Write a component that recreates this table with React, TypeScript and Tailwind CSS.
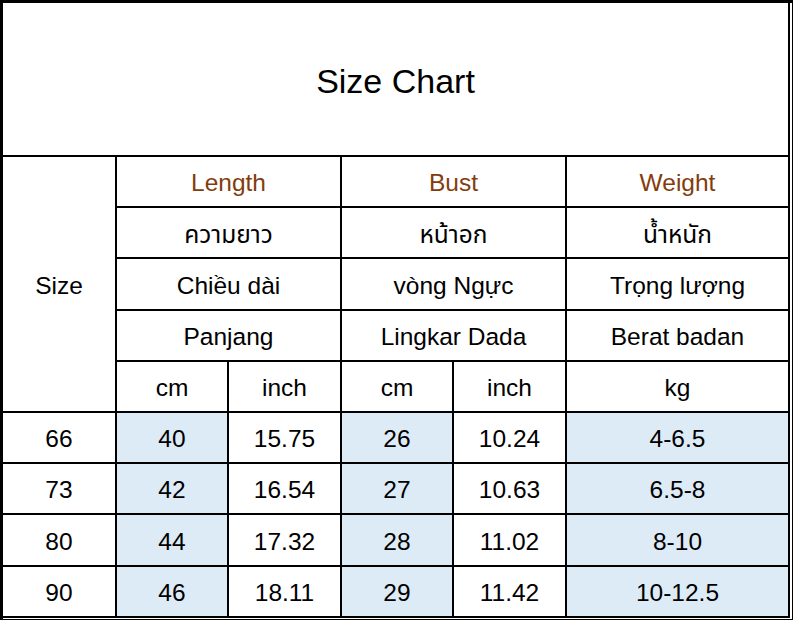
const headers = [
  { label: "Length", span: "col-span-2" },
  { label: "Bust", span: "col-span-2" },
  { label: "Weight", span: "" },
];

const translations = [
  ["ความยาว", "หน้าอก", "น้ำหนัก"],
  ["Chiều dài", "vòng Ngực", "Trọng lượng"],
  ["Panjang", "Lingkar Dada", "Berat badan"],
];

const units = ["cm", "inch", "cm", "inch", "kg"];

const rows = [
  ["66", "40", "15.75", "26", "10.24", "4-6.5"],
  ["73", "42", "16.54", "27", "10.63", "6.5-8"],
  ["80", "44", "17.32", "28", "11.02", "8-10"],
  ["90", "46", "18.11", "29", "11.42", "10-12.5"],
];

const blueCols = [1, 3, 5];

function Cell({
  children,
  className = "",
  color = "text-black",
  bg = "bg-white",
}: {
  children?: React.ReactNode;
  className?: string;
  color?: string;
  bg?: string;
}) {
  return (
    <div
      className={`flex items-center justify-center pt-[4px] text-[24.5px] leading-none ${color} ${bg} ${className}`}
    >
      {children}
    </div>
  );
}

export default function App() {
  return (
    <div
      className="h-[622px] w-[797px] bg-white"
      style={{ fontFamily: '"Liberation Sans", Arial, "Noto Sans Thai", "Noto Sans", sans-serif' }}
    >
      <div className="h-[620px] w-[793px] border-t-[3px] border-r border-b border-l-[3px] border-black">
        <div className="grid w-[787px] grid-cols-[112px_110px_111px_110px_111px_221px] grid-rows-[152px_repeat(9,49.2px)] gap-[2px] bg-black pr-[2px] pb-[2px]">
          <Cell className="col-span-6 !text-[34px]">Size Chart</Cell>

          <Cell className="row-span-5">Size</Cell>
          {headers.map((h) => (
            <Cell key={h.label} className={h.span} color="text-[#843c0c]">
              {h.label}
            </Cell>
          ))}

          {translations.map((row) =>
            row.map((t, i) => (
              <Cell key={t} className={i < 2 ? "col-span-2" : ""}>
                {t}
              </Cell>
            )),
          )}

          {units.map((u, i) => (
            <Cell key={i}>{u}</Cell>
          ))}

          {rows.map((row) =>
            row.map((v, i) => (
              <Cell
                key={row[0] + "-" + i}
                bg={blueCols.includes(i) ? "bg-[#ddebf7]" : "bg-white"}
              >
                {v}
              </Cell>
            )),
          )}
        </div>
      </div>
    </div>
  );
}
